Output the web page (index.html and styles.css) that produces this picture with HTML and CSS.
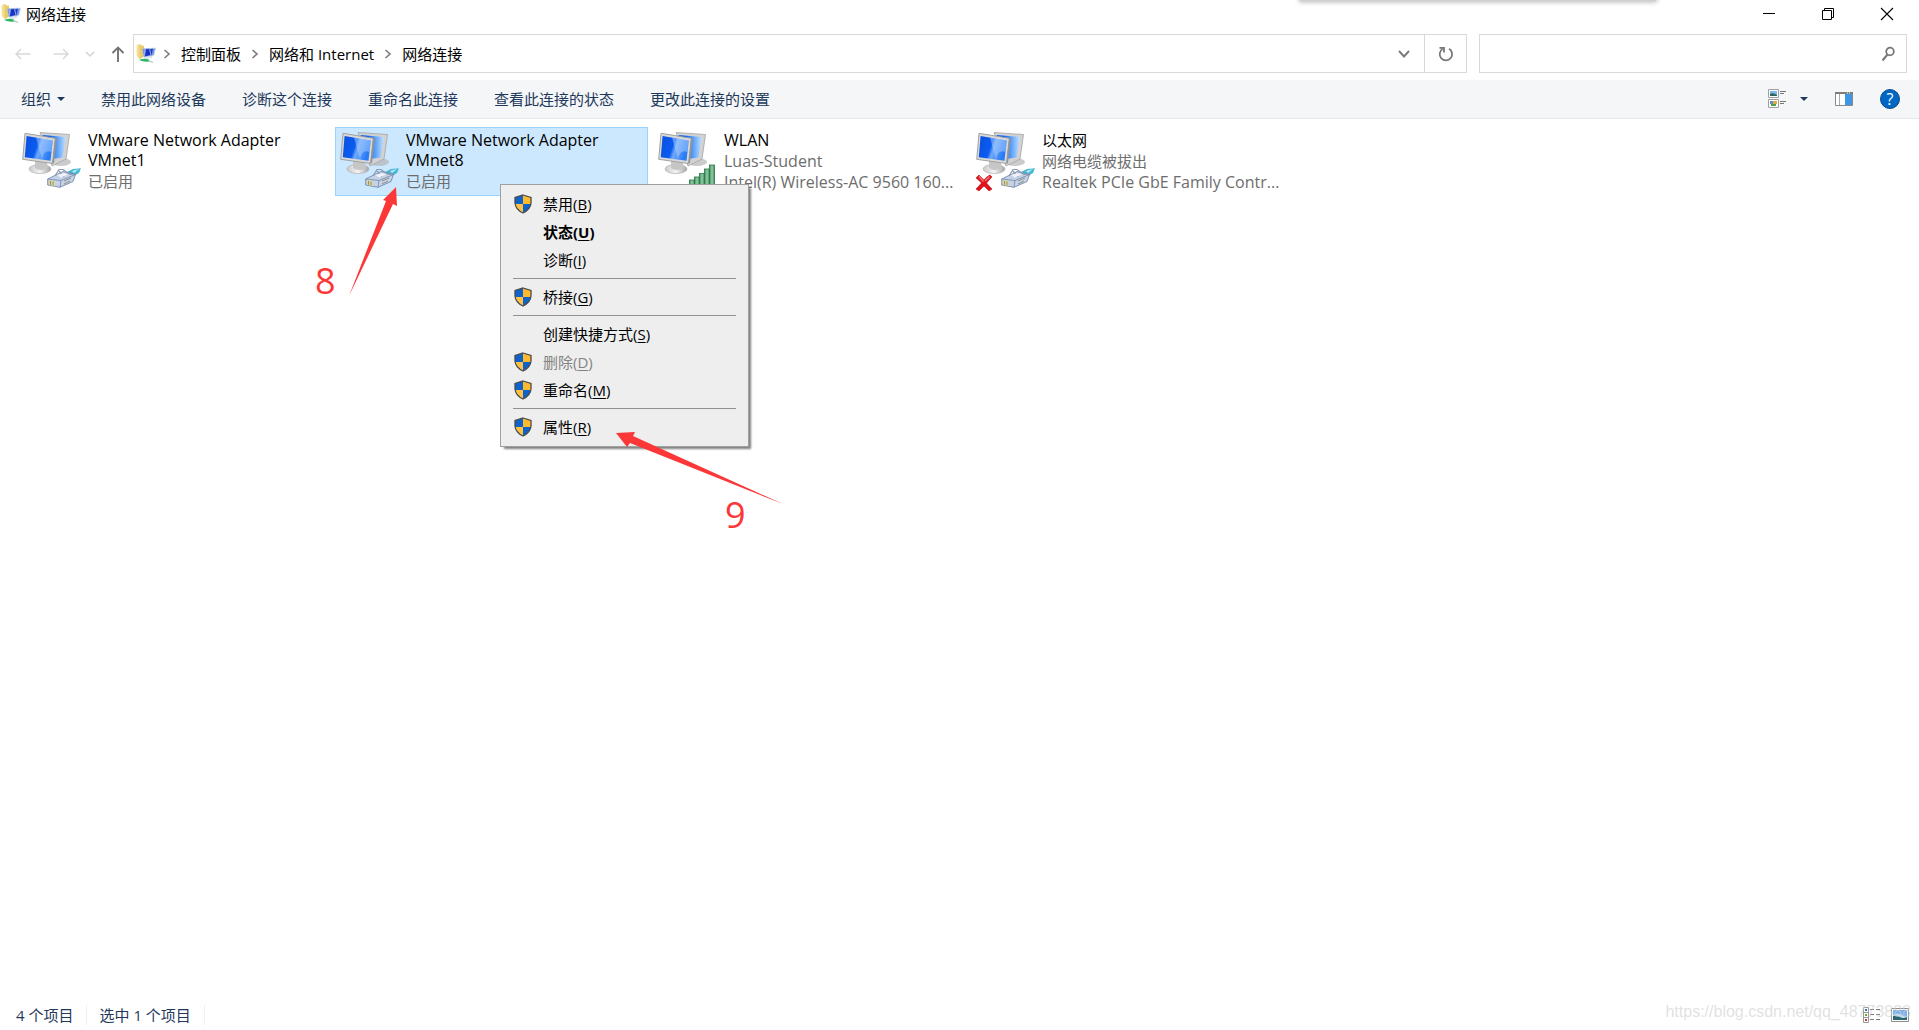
FILE: index.html
```html
<!DOCTYPE html>
<html lang="zh-CN">
<head>
    <meta charset="UTF-8">
    <meta name="viewport" content="width=device-width, initial-scale=1.0">
    <title>网络连接</title>
    <link rel="stylesheet" href="styles.css">
</head>
<body>
    <!-- Shared icons -->
    <svg class="sprite" aria-hidden="true">
        <defs>
            <linearGradient id="screen" x1="0" y1="0" x2="1" y2="0.3">
                <stop offset="0" stop-color="#0a4fe0"/>
                <stop offset="0.5" stop-color="#0b5cf0"/>
                <stop offset="0.62" stop-color="#6fa8fb"/>
                <stop offset="1" stop-color="#2a7cf6"/>
            </linearGradient>
            <linearGradient id="screen-back" x1="0" y1="0" x2="1" y2="0">
                <stop offset="0.3" stop-color="#0f62ee"/>
                <stop offset="0.65" stop-color="#5fa4fa"/>
                <stop offset="1" stop-color="#c4e0ff"/>
            </linearGradient>
            <linearGradient id="stand" x1="0" y1="0" x2="1" y2="0">
                <stop offset="0" stop-color="#c9c9c9"/>
                <stop offset="0.5" stop-color="#f4f4f4"/>
                <stop offset="1" stop-color="#a5a5a5"/>
            </linearGradient>
            <linearGradient id="bar" x1="0" y1="0" x2="1" y2="0">
                <stop offset="0" stop-color="#3f8a5c"/>
                <stop offset="0.5" stop-color="#8fd0a5"/>
                <stop offset="1" stop-color="#3f8a5c"/>
            </linearGradient>
            <linearGradient id="folder" x1="0" y1="0" x2="1" y2="0">
                <stop offset="0" stop-color="#f9e9a4"/>
                <stop offset="1" stop-color="#dfbc53"/>
            </linearGradient>
        </defs>
        <symbol id="icon-computers" viewBox="0 0 60 60">
            <ellipse cx="40" cy="32" rx="10" ry="4" fill="#b5b5b5" opacity="0.7"/>
            <path d="M19 2.5L48.5 4.5L45 29L31 36Z" fill="#d2d2d2" stroke="#a3a3a3" stroke-width="0.8"/>
            <path d="M21.5 5L45 7L41.5 27.5L31 29Z" fill="url(#screen-back)"/>
            <ellipse cx="19" cy="39" rx="11" ry="4.6" fill="url(#stand)" stroke="#aaa" stroke-width="0.6"/>
            <path d="M14 31L26 33L27 38Q19 42 14 38Z" fill="#c6c6c6"/>
            <path d="M4 3.3L34.3 8.3L31.5 33.5L1.7 29.3Z" fill="#d9d9d9" stroke="#999" stroke-width="0.9"/>
            <path d="M34.3 8.3L36 8L33 33L31.5 33.5Z" fill="#939393"/>
            <path d="M5.6 6L31.8 10.5L29.5 30.8L3.8 27.3Z" fill="url(#screen)"/>
            <path d="M15 7.6L31.8 10.5L30.4 22Q23 19 21 29.6Z" fill="#b9d7ff" opacity="0.45"/>
        </symbol>
        <symbol id="icon-plug" viewBox="0 0 60 60">
            <path d="M46 42L52 39L60 38.3L58 43L53 46Z" fill="#48b6d3"/>
            <path d="M51 41L58 39L53 43Z" fill="#b4edf6"/>
            <path d="M26.7 49L42 41.5L54.5 44.5L52 51.5L39 57.3L26.7 55Z" fill="#c6d2e6" stroke="#687da3" stroke-width="0.8"/>
            <path d="M26.7 49L40 50.5L54.5 44.5M40 50.5L39 57.3" fill="none" stroke="#7185a9" stroke-width="0.8"/>
            <path d="M34 46L38 39.5L42 39.5L49 44.5L53 44M38 41L43 47" fill="none" stroke="#8d99ae" stroke-width="1.2"/>
            <path d="M36 45L43 43L47 44.5L40 47.5Z" fill="#eef3fa"/>
            <path d="M28 50L33 51L34 56L28 54.7Z" fill="#e0d58a"/>
            <path d="M29.5 51V54.7M32 51.5V55.3M43 51L50 48M43 54L49 51" stroke="#7c7d70" stroke-width="0.8"/>
        </symbol>
        <symbol id="icon-signal" viewBox="0 0 60 60">
            <g fill="url(#bar)" stroke="#2e754a" stroke-width="0.8">
                <rect x="32.5" y="50" width="5" height="8"/>
                <rect x="37.5" y="47" width="5" height="11"/>
                <rect x="42.5" y="43.5" width="5" height="14.5"/>
                <rect x="47.5" y="39" width="5" height="19"/>
                <rect x="52.5" y="35" width="5" height="23"/>
            </g>
        </symbol>
        <symbol id="icon-cross" viewBox="0 0 18 18">
            <path d="M4 1Q6 3 9 6Q12 2 15 1L17 3Q14 6 11.5 9Q14 12 17 15L14 17Q11 14 9 12Q6 15 4 17L1 15Q4 12 6.5 9Q4 6 1 4Z" fill="#e0131b" stroke="#b70d13" stroke-width="0.6"/>
            <path d="M4 2.5L8.5 7.5M10 7L14.5 2.5" stroke="#f8797d" stroke-width="1.4"/>
        </symbol>
        <symbol id="icon-folder" viewBox="0 0 20 20">
            <path d="M0.5 1L4 0L7 3V13L4 15L0.5 12Z" fill="url(#folder)"/>
            <path d="M4 2L8 1.5V12L4 15Z" fill="#e8ca69"/>
            <path d="M12 4.5L19.5 4L18 11L14 13Z" fill="#6f97ea" stroke="#d3dbe6" stroke-width="0.8"/>
            <path d="M14 5L17 4.8L15.5 11L14 11.5Z" fill="#1d3fc8"/>
            <path d="M6.5 5L13.5 4.5L15 11.5L8 13Z" fill="#1733c4" stroke="#b3c3dd" stroke-width="0.8"/>
            <path d="M7 5.5L10 5L9 12L8.3 12.5Z" fill="#8fabf1"/>
            <path d="M8 13.5L15 12.5L17 14L9 15Z" fill="#dfe5ea"/>
            <path d="M3 16Q8 14 13 15.5L13.5 17.5Q8 18.5 3 16Z" fill="#2bb765"/>
            <path d="M12 16.5L17 18.5" stroke="#a9c4b6" stroke-width="1.2"/>
        </symbol>
        <symbol id="icon-shield" viewBox="0 0 18 20">
            <path d="M9 1L17 3.5V9Q16.5 15.5 9 19Q1.5 15.5 1 9V3.5Z" fill="#0f63c8"/>
            <path d="M9 1L17 3.5V10H9Z" fill="#ffb92e"/>
            <path d="M9 10V19Q2.5 16 1.2 10Z" fill="#ffc044"/>
            <path d="M9 1L17 3.5V9Q16.5 15.5 9 19Q1.5 15.5 1 9V3.5Z" fill="none" stroke="#4b4b4b" stroke-width="1.3"/>
        </symbol>
        <symbol id="icon-chevron" viewBox="0 0 8 10">
            <path d="M1.5 1L6 5L1.5 9" fill="none" stroke="#7d7d7d" stroke-width="1.6"/>
        </symbol>
    </svg>

    <header class="titlebar">
        <svg class="folder-icon"><use href="#icon-folder"/></svg>
        <h1>网络连接</h1>
        <div class="window-buttons">
            <button type="button" aria-label="最小化">
                <svg width="14" height="14" viewBox="0 0 14 14"><path d="M1 6.5H13" stroke="#000"/></svg>
            </button>
            <button type="button" aria-label="还原">
                <svg width="14" height="14" viewBox="0 0 14 14"><path d="M1.5 3.5H10.5V12.5H1.5ZM3.5 3.5V1.5H12.5V10.5H10.5" fill="none" stroke="#000"/></svg>
            </button>
            <button type="button" aria-label="关闭">
                <svg width="14" height="14" viewBox="0 0 14 14"><path d="M1 1L13 13M13 1L1 13" stroke="#000" stroke-width="1.1"/></svg>
            </button>
        </div>
    </header>

    <div class="navbar">
        <div class="nav-buttons">
            <button type="button" aria-label="后退" disabled>
                <svg width="16" height="16" viewBox="0 0 16 16"><path d="M15.5 8H1M6 3L1 8L6 13" fill="none" stroke="#d9d9d9" stroke-width="1.5"/></svg>
            </button>
            <button type="button" aria-label="前进" disabled>
                <svg width="16" height="16" viewBox="0 0 16 16"><path d="M0.5 8H15M10 3L15 8L10 13" fill="none" stroke="#d9d9d9" stroke-width="1.5"/></svg>
            </button>
            <button type="button" class="nav-recent" aria-label="最近位置">
                <svg width="10" height="8" viewBox="0 0 10 8"><path d="M1 2L5 6L9 2" fill="none" stroke="#d4d4d4" stroke-width="1.5"/></svg>
            </button>
            <button type="button" class="nav-up" aria-label="上移">
                <svg width="14" height="16" viewBox="0 0 14 16"><path d="M7 16V1.5M1.5 7L7 1.5L12.5 7" fill="none" stroke="#737373" stroke-width="1.9"/></svg>
            </button>
        </div>
        <div class="address">
            <svg class="folder-icon"><use href="#icon-folder"/></svg>
            <nav class="crumbs" aria-label="路径">
                <svg class="chevron"><use href="#icon-chevron"/></svg>
                <a href="#">控制面板</a>
                <svg class="chevron"><use href="#icon-chevron"/></svg>
                <a href="#">网络和 Internet</a>
                <svg class="chevron"><use href="#icon-chevron"/></svg>
                <a href="#">网络连接</a>
            </nav>
            <button type="button" class="history" aria-label="以前的位置">
                <svg width="12" height="10" viewBox="0 0 12 10"><path d="M1 2L6 7.5L11 2" fill="none" stroke="#7a7a7a" stroke-width="1.9"/></svg>
            </button>
            <button type="button" class="refresh" aria-label="刷新">
                <svg width="16" height="16" viewBox="0 0 16 16"><path d="M11 2.8A6.2 6.2 0 1 1 4.5 3M1.5 1.8H6V6.5" fill="none" stroke="#777" stroke-width="1.8"/></svg>
            </button>
        </div>
        <label class="search">
            <input type="search" aria-label="搜索">
            <svg width="14" height="16" viewBox="0 0 14 16"><circle cx="9" cy="5.5" r="3.8" fill="none" stroke="#777" stroke-width="1.8"/><path d="M6.5 8.5L1.5 14.5" stroke="#777" stroke-width="2"/></svg>
        </label>
    </div>

    <div class="toolbar">
        <button type="button">组织<span class="caret"></span></button>
        <button type="button">禁用此网络设备</button>
        <button type="button">诊断这个连接</button>
        <button type="button">重命名此连接</button>
        <button type="button">查看此连接的状态</button>
        <button type="button">更改此连接的设置</button>
        <div class="toolbar-right">
            <button type="button" aria-label="更改视图">
                <svg width="19" height="20" viewBox="0 0 19 20">
                    <path d="M0.5 0.5H10.5V8.5H0.5ZM0.5 10.5H10.5V18.5H0.5Z" fill="#fff" stroke="#a0a0a0"/>
                    <path d="M2 2H9V7H2Z" fill="#7db9eb"/><path d="M2 5Q5 3 9 6V7H2Z" fill="#30645f"/>
                    <path d="M2 12H5V15H2Z" fill="#5c8fd6"/><path d="M5 12H9V15H5Z" fill="#e6a93b"/><path d="M3 15H8V17H3Z" fill="#4e9d4a"/>
                    <path d="M12 2.5H18M12 4.5H16M12 12.5H18M12 14.5H16" stroke="#777"/>
                </svg>
                <span class="caret"></span>
            </button>
            <button type="button" aria-label="显示预览窗格">
                <svg width="18" height="14" viewBox="0 0 18 14">
                    <path d="M0.5 0.5H17.5V13.5H0.5Z" fill="#fff" stroke="#8a8a8a"/>
                    <path d="M0 0H18V2H0Z" fill="#7d7d7d"/><path d="M4.5 2V13" stroke="#a9a9a9"/>
                    <path d="M10 2H17V13H10Z" fill="#3d97e4"/><path d="M12 1H16" stroke="#fff" stroke-dasharray="1 1"/>
                </svg>
            </button>
            <button type="button" class="help" aria-label="帮助">?</button>
        </div>
    </div>

    <main class="connections">
        <article class="connection">
            <svg class="connection-icon"><use href="#icon-computers"/><use href="#icon-plug"/></svg>
            <div class="connection-text">
                <h2>VMware Network Adapter VMnet1</h2>
                <p lang="zh">已启用</p>
            </div>
        </article>
        <article class="connection selected">
            <svg class="connection-icon"><use href="#icon-computers"/><use href="#icon-plug"/></svg>
            <div class="connection-text">
                <h2>VMware Network Adapter VMnet8</h2>
                <p lang="zh">已启用</p>
            </div>
        </article>
        <article class="connection">
            <svg class="connection-icon"><use href="#icon-computers"/><use href="#icon-signal"/></svg>
            <div class="connection-text">
                <h2>WLAN</h2>
                <p>Luas-Student</p>
                <p>Intel(R) Wireless-AC 9560 160...</p>
            </div>
        </article>
        <article class="connection">
            <svg class="connection-icon"><use href="#icon-computers"/><use href="#icon-plug"/><use href="#icon-cross" x="0" y="44" width="18" height="18"/></svg>
            <div class="connection-text">
                <h2 lang="zh">以太网</h2>
                <p lang="zh">网络电缆被拔出</p>
                <p>Realtek PCIe GbE Family Contr...</p>
            </div>
        </article>
    </main>

    <footer class="statusbar">
        <span>4 个项目</span>
        <span>选中 1 个项目</span>
        <div class="view-buttons">
            <button type="button" aria-label="详细信息">
                <svg width="18" height="16" viewBox="0 0 18 16">
                    <path d="M0.5 0.5H5.5V15.5H0.5ZM0.5 5.5H5.5M0.5 10.5H5.5" fill="#fff" stroke="#999"/>
                    <path d="M2 2H4V4H2Z" fill="#3277a8"/><path d="M2 7H4V9H2Z" fill="#7a9b32"/><path d="M2 12H4V14H2Z" fill="#c2402a"/>
                    <path d="M7 2.5H11M13 2.5H17M7 7.5H11M13 7.5H17M7 12.5H11M13 12.5H17" stroke="#777"/>
                </svg>
            </button>
            <button type="button" aria-label="大图标">
                <svg width="18" height="14" viewBox="0 0 18 14">
                    <path d="M0.5 0.5H17.5V13.5H0.5Z" fill="#fff" stroke="#8e8e8e"/>
                    <path d="M2 2H16V12H2Z" fill="#78aff0"/><path d="M2 7Q7 4 11 7T16 8V12H2Z" fill="#c4dff2"/>
                    <path d="M2 8Q6 7 9 9T16 9V12H2Z" fill="#2d6670"/>
                </svg>
            </button>
        </div>
        <span class="watermark">https://blog.csdn.net/qq_48773888</span>
    </footer>

    <div class="context-menu" role="menu">
        <button type="button" role="menuitem"><svg><use href="#icon-shield"/></svg><span>禁用(<u>B</u>)</span></button>
        <button type="button" role="menuitem" class="default"><span>状态(<u>U</u>)</span></button>
        <button type="button" role="menuitem"><span>诊断(<u>I</u>)</span></button>
        <hr>
        <button type="button" role="menuitem"><svg><use href="#icon-shield"/></svg><span>桥接(<u>G</u>)</span></button>
        <hr>
        <button type="button" role="menuitem"><span>创建快捷方式(<u>S</u>)</span></button>
        <button type="button" role="menuitem" disabled><svg><use href="#icon-shield"/></svg><span>删除(<u>D</u>)</span></button>
        <button type="button" role="menuitem"><svg><use href="#icon-shield"/></svg><span>重命名(<u>M</u>)</span></button>
        <hr>
        <button type="button" role="menuitem"><svg><use href="#icon-shield"/></svg><span>属性(<u>R</u>)</span></button>
    </div>

    <div class="top-shadow"></div>

    <!-- Step markers -->
    <svg class="marker marker-8" viewBox="0 0 100 130">
        <path d="M91 7L92 26L88 24L44 116L81 21L78 20Z"/>
        <text x="10" y="114">8</text>
    </svg>
    <svg class="marker marker-9" viewBox="0 0 180 110">
        <path d="M6 3L25 2L23 6L173 74L20 13L17 17Z"/>
        <text x="115" y="98">9</text>
    </svg>
</body>
</html>
```
FILE: styles.css
```css
* {
    margin: 0;
    padding: 0;
    box-sizing: border-box;
}

body {
    position: relative;
    display: flex;
    flex-direction: column;
    min-height: 100vh;
    background-color: #fff;
    color: #000;
    font-family: "Open Sans", "Noto Sans CJK SC", sans-serif;
    font-size: 15px;
    line-height: 20px;
}

button {
    border: none;
    background: none;
    color: inherit;
    font: inherit;
}

svg {
    display: block;
    flex: none;
}

.sprite {
    position: absolute;
    width: 0;
    height: 0;
}

.folder-icon {
    width: 20px;
    height: 20px;
}

/* Title bar */
.titlebar {
    display: flex;
    align-items: center;
    gap: 5px;
    height: 28px;
    padding-left: 1px;
}

.titlebar h1 {
    font-size: 15px;
    font-weight: 400;
}

.window-buttons {
    display: flex;
    margin-left: auto;
    margin-right: 3px;
}

.window-buttons button {
    display: flex;
    justify-content: center;
    align-items: center;
    width: 59px;
    height: 28px;
}

/* Navigation row */
.navbar {
    display: flex;
    align-items: center;
    padding: 6px 12px 7px;
}

.nav-buttons {
    display: flex;
    align-items: center;
    width: 121px;
    padding-left: 3px;
}

.nav-buttons button {
    margin-right: 22px;
}

.nav-buttons .nav-recent,
.nav-buttons button:nth-child(2) {
    margin-right: 16px;
}

.nav-buttons .nav-up {
    margin-right: 0;
}

.address {
    display: flex;
    align-items: center;
    flex: 1;
    height: 39px;
    padding-left: 2px;
    border: 1px solid #d9d9d9;
}

.crumbs {
    display: flex;
    align-items: center;
    gap: 10px;
    padding-left: 7px;
}

.crumbs a {
    color: #000;
    text-decoration: none;
}

.chevron {
    width: 8px;
    height: 10px;
}

.history {
    display: flex;
    justify-content: center;
    width: 40px;
    margin-left: auto;
}

.refresh {
    display: flex;
    justify-content: center;
    align-items: center;
    align-self: stretch;
    width: 42px;
    border-left: 1px solid #d9d9d9;
}

.search {
    display: flex;
    align-items: center;
    flex: 0 1 428px;
    height: 39px;
    margin-left: 12px;
    padding: 0 11px;
    border: 1px solid #d9d9d9;
}

.search input {
    flex: 1;
    min-width: 0;
    border: none;
    outline: none;
    background: none;
    font: inherit;
}

/* Command bar */
.toolbar {
    display: flex;
    align-items: center;
    gap: 36px;
    height: 39px;
    padding: 0 19px 0 21px;
    border-bottom: 1px solid #e5e7ea;
    background-color: #f4f6f8;
    color: #1e395b;
}

.toolbar button {
    display: flex;
    align-items: center;
    gap: 6px;
    white-space: nowrap;
}

.caret {
    border: 4px solid transparent;
    border-top-color: #1e395b;
    border-bottom: none;
}

.toolbar-right {
    display: flex;
    align-items: center;
    gap: 27px;
    margin-left: auto;
}

.toolbar-right button:first-child {
    gap: 13px;
}

.toolbar .help {
    justify-content: center;
    width: 20px;
    height: 20px;
    border: 1px solid #0b4c8c;
    border-radius: 50%;
    background-color: #0067c5;
    color: #fff;
    font-size: 16px;
}

/* Connections */
.connections {
    display: grid;
    grid-template-columns: repeat(auto-fill, 313px);
    align-content: start;
    gap: 5px;
    flex: 1;
    padding: 8px 17px;
}

.connection {
    display: flex;
    gap: 7px;
    min-height: 69px;
    padding: 2px 0 2px 3px;
    border: 1px solid transparent;
}

.connection.selected {
    border-color: #99d1ff;
    background-color: #cce8ff;
}

.connection-icon {
    width: 60px;
    height: 60px;
    overflow: visible;
}

.connection-text {
    flex: 1;
    min-width: 0;
    font-size: 16px;
}

.connection-text h2 {
    margin-bottom: 1px;
    font-size: 16px;
    font-weight: 400;
    line-height: 20px;
}

.connection-text p {
    color: #6d6d6d;
    line-height: 21px;
    white-space: nowrap;
}

.connection-text [lang="zh"] {
    font-size: 15px;
}

/* Context menu */
.context-menu {
    position: absolute;
    top: 184px;
    left: 500px;
    width: 249px;
    padding: 5px 12px;
    border: 1px solid #a0a0a0;
    background-color: #eee;
    box-shadow: 3px 3px 2px -1px rgba(0, 0, 0, 0.5);
}

.context-menu button {
    display: grid;
    grid-template-columns: 20px auto;
    column-gap: 10px;
    align-items: center;
    justify-content: start;
    width: 100%;
    height: 28px;
    text-align: left;
}

.context-menu button:disabled {
    color: #838383;
}

.context-menu .default {
    font-weight: 700;
}

.context-menu svg {
    width: 20px;
    height: 20px;
}

.context-menu span {
    grid-column: 2;
}

.context-menu u {
    text-underline-offset: 2px;
}

.context-menu hr {
    margin: 4px 0;
    border: none;
    border-top: 1px solid #919191;
}

/* Status bar */
.statusbar {
    position: relative;
    display: flex;
    align-items: center;
    height: 30px;
    padding: 0 10px 0 16px;
    color: #1e395b;
}

.statusbar > span:not(.watermark) {
    margin-right: 12px;
    padding-right: 13px;
    border-right: 1px solid #f0f0f0;
}

.view-buttons {
    display: flex;
    align-items: center;
    gap: 10px;
    margin-left: auto;
}

.watermark {
    position: absolute;
    right: 8px;
    bottom: 8px;
    color: rgba(205, 205, 205, 0.6);
    font-family: "Liberation Sans", sans-serif;
    font-size: 16px;
}

/* Overlays */
.top-shadow {
    position: absolute;
    top: -4px;
    left: 1300px;
    width: 356px;
    height: 5px;
    background-color: #d0d0d0;
    box-shadow: 0 0 5px 1px rgba(0, 0, 0, 0.3);
}

.marker {
    position: absolute;
    fill: #fc3737;
    font-size: 36px;
    pointer-events: none;
}

.marker-8 {
    top: 180px;
    left: 305px;
    width: 100px;
    height: 130px;
}

.marker-9 {
    top: 430px;
    left: 610px;
    width: 180px;
    height: 110px;
}
```
